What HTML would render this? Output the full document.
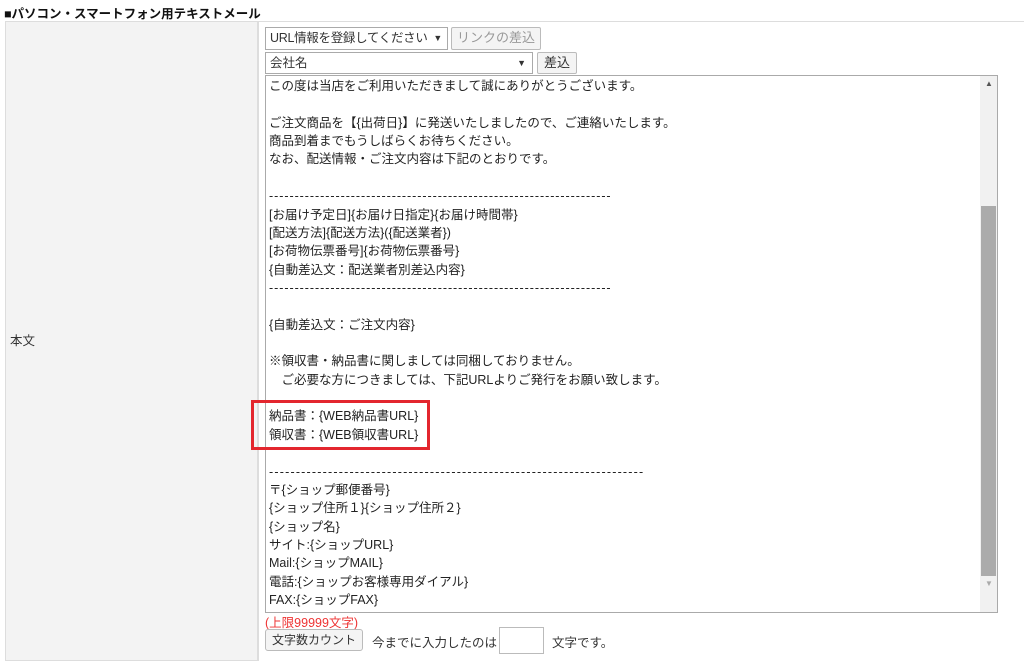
<html><head><style>
body{margin:0;background:#fff;font-family:"Liberation Sans","Noto Sans CJK JP",sans-serif;font-size:13px;color:#333;position:relative;width:1024px;height:654px;overflow:hidden}
.t{position:absolute;left:4px;top:3px;font-weight:bold;font-size:12.5px;color:#111}
.lc{position:absolute;left:5px;top:21px;width:253px;height:640px;background:#f3f3f3;border:1px solid #ddd;box-sizing:border-box}
.rc{position:absolute;left:258px;top:21px;width:766px;height:640px;border-top:1px solid #ddd;border-left:1px solid #ddd;box-sizing:border-box}
.lab{position:absolute;left:10px;top:330px;font-size:12.5px}
.sel{position:absolute;background:#fff;border:1px solid #aaa;box-sizing:border-box;font-size:12.5px;padding:2px 4px;line-height:17px;white-space:nowrap;overflow:hidden}
.btn{position:absolute;border:1px solid #bbb;background:#f4f4f4;box-sizing:border-box;font-size:13px;text-align:center;line-height:20px;border-radius:2px}
.ta{position:absolute;left:265px;top:75px;width:733px;height:538px;border:1px solid #aaa;box-sizing:border-box;overflow:hidden}
.tx{position:absolute;left:3px;top:1px;line-height:18.36px;font-size:12.5px;white-space:pre;color:#222}
.d{letter-spacing:0.95px}
.d2{letter-spacing:1.2px}
.sb{position:absolute;right:0;top:0;width:17px;height:536px;background:#f1f1f1}
.th{position:absolute;left:1px;top:130px;width:15px;height:370px;background:#ababab}
.red{position:absolute;left:251px;top:400px;width:179px;height:50px;border:3px solid #e3262e;box-sizing:border-box}
</style></head><body>
<div class="t">■パソコン・スマートフォン用テキストメール</div>
<div class="lc"></div><div class="rc"></div>
<div class="lab">本文</div>
<div class="sel" style="left:265px;top:27px;width:183px;height:23px;letter-spacing:-0.3px">URL情報を登録してください<span style="position:absolute;right:5px;top:2px;font-size:9px;background:#fff">▼</span></div>
<div class="btn" style="left:451px;top:27px;width:90px;height:23px;color:#999">リンクの差込</div>
<div class="sel" style="left:265px;top:52px;width:268px;height:22px">会社名<span style="position:absolute;right:6px;font-size:9px">▼</span></div>
<div class="btn" style="left:537px;top:52px;width:40px;height:22px">差込</div>
<div class="ta"><div class="tx">この度は当店をご利用いただきまして誠にありがとうございます。

ご注文商品を【{出荷日}】に発送いたしましたので、ご連絡いたします。
商品到着までもうしばらくお待ちください。
なお、配送情報・ご注文内容は下記のとおりです。

<span class="d">-------------------------------------------------------------------</span>
[お届け予定日]{お届け日指定}{お届け時間帯}
[配送方法]{配送方法}({配送業者})
[お荷物伝票番号]{お荷物伝票番号}
{自動差込文：配送業者別差込内容}
<span class="d">-------------------------------------------------------------------</span>

{自動差込文：ご注文内容}

※領収書・納品書に関しましては同梱しておりません。
　ご必要な方につきましては、下記URLよりご発行をお願い致します。

納品書：{WEB納品書URL}
領収書：{WEB領収書URL}

<span class="d2">----------------------------------------------------------------------</span>
〒{ショップ郵便番号}
{ショップ住所１}{ショップ住所２}
{ショップ名}
サイト:{ショップURL}
Mail:{ショップMAIL}
電話:{ショップお客様専用ダイアル}
FAX:{ショップFAX}</div>
<div class="sb"><div style="position:absolute;top:3px;left:5px;font-size:8px;color:#555">▲</div><div class="th"></div><div style="position:absolute;top:503px;left:5px;font-size:8px;color:#aaa">▼</div></div></div>
<div class="red"></div>
<div style="position:absolute;left:265px;top:612px;color:#e33;font-size:12.5px">(上限99999文字)</div>
<div class="btn" style="left:265px;top:629px;width:98px;height:22px;font-size:12px;border-radius:3px">文字数カウント</div>
<div style="position:absolute;left:372px;top:632px;font-size:12.5px">今までに入力したのは</div>
<div style="position:absolute;left:499px;top:627px;width:45px;height:27px;border:1px solid #bbb;box-sizing:border-box"></div>
<div style="position:absolute;left:552px;top:632px;font-size:12.5px">文字です。</div>
</body></html>
